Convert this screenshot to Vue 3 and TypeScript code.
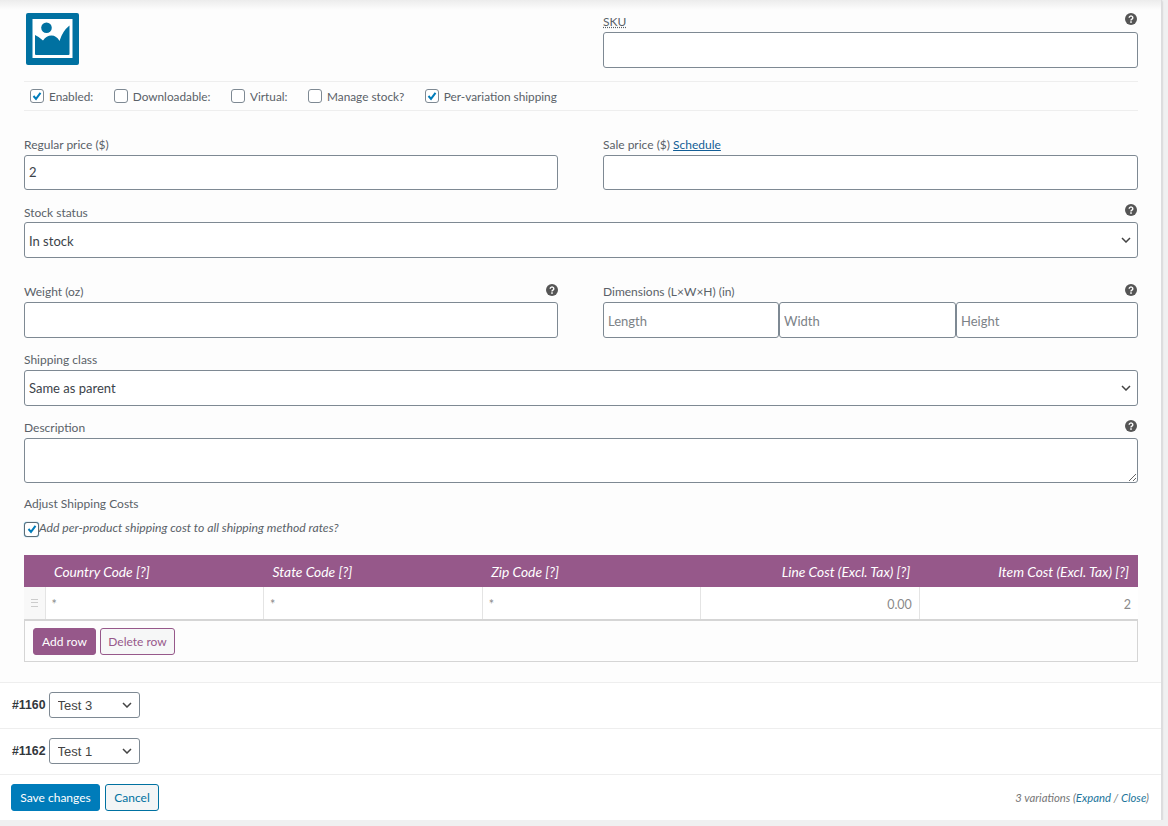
<template>
  <div class="panel">
    <div class="form">
      <div class="head">
        <svg class="thumb" width="53" height="52" viewBox="0 0 53 52">
          <rect width="53" height="52" rx="2" fill="#0071a1" />
          <rect x="6.500" y="6" width="40" height="39" fill="#fff" />
          <circle cx="20.500" cy="14.700" r="5.300" fill="#0071a1" />
          <path d="M9 22Q13.500 24 17 27.500Q20.500 22.500 25.500 22.500Q30.500 22.500 33.500 28Q36.500 18 43.500 12.500V41a1 1 0 0 1-1 1H10a1 1 0 0 1-1-1Z" fill="#0071a1" />
        </svg>
        <div class="field sku">
          <div class="label-row">
            <label><abbr>SKU</abbr></label>
            <svg class="help" width="12" height="12" viewBox="0 0 12 12"><circle cx="6" cy="6" r="6" fill="#555" /><path d="M4.200 4.700a1.800 1.700 0 1 1 2.700 1.500c-.6.350-.9.600-.9 1.300" fill="none" stroke="#fff" stroke-width="1.400" /><rect x="5.200" y="8.300" width="1.600" height="1.500" fill="#fff" /></svg>
          </div>
          <input class="control tall" type="text" />
        </div>
      </div>

      <div class="options">
        <label v-for="opt in options" :key="opt.name" class="option">
          <input class="check" type="checkbox" :checked="opt.on" />
          <span>{{ opt.name }}</span>
        </label>
      </div>

      <div class="two price-row">
        <div class="field">
          <div class="label-row"><label>Regular price ($)</label></div>
          <input class="control price" type="text" value="2" />
        </div>
        <div class="field">
          <div class="label-row"><label>Sale price ($) <a href="#">Schedule</a></label></div>
          <input class="control" type="text" />
        </div>
      </div>

      <div class="field stock">
        <div class="label-row short">
          <label>Stock status</label>
          <svg class="help" width="12" height="12" viewBox="0 0 12 12"><circle cx="6" cy="6" r="6" fill="#555" /><path d="M4.200 4.700a1.800 1.700 0 1 1 2.700 1.500c-.6.350-.9.600-.9 1.300" fill="none" stroke="#fff" stroke-width="1.400" /><rect x="5.200" y="8.300" width="1.600" height="1.500" fill="#fff" /></svg>
        </div>
        <select class="control tall pick low"><option>In stock</option></select>
      </div>

      <div class="two size-row">
        <div class="field">
          <div class="label-row">
            <label>Weight (oz)</label>
            <svg class="help flush" width="12" height="12" viewBox="0 0 12 12"><circle cx="6" cy="6" r="6" fill="#555" /><path d="M4.200 4.700a1.800 1.700 0 1 1 2.700 1.500c-.6.350-.9.600-.9 1.300" fill="none" stroke="#fff" stroke-width="1.400" /><rect x="5.200" y="8.300" width="1.600" height="1.500" fill="#fff" /></svg>
          </div>
          <input class="control tall" type="text" />
        </div>
        <div class="field">
          <div class="label-row">
            <label>Dimensions (L×W×H) (in)</label>
            <svg class="help" width="12" height="12" viewBox="0 0 12 12"><circle cx="6" cy="6" r="6" fill="#555" /><path d="M4.200 4.700a1.800 1.700 0 1 1 2.700 1.500c-.6.350-.9.600-.9 1.300" fill="none" stroke="#fff" stroke-width="1.400" /><rect x="5.200" y="8.300" width="1.600" height="1.500" fill="#fff" /></svg>
          </div>
          <div class="dims">
            <input class="control tall" type="text" placeholder="Length" />
            <input class="control tall" type="text" placeholder="Width" />
            <input class="control tall" type="text" placeholder="Height" />
          </div>
        </div>
      </div>

      <div class="field next">
        <div class="label-row"><label>Shipping class</label></div>
        <select class="control tall pick"><option>Same as parent</option></select>
      </div>

      <div class="field next">
        <div class="label-row">
          <label>Description</label>
          <svg class="help" width="12" height="12" viewBox="0 0 12 12"><circle cx="6" cy="6" r="6" fill="#555" /><path d="M4.200 4.700a1.800 1.700 0 1 1 2.700 1.500c-.6.350-.9.600-.9 1.300" fill="none" stroke="#fff" stroke-width="1.400" /><rect x="5.200" y="8.300" width="1.600" height="1.500" fill="#fff" /></svg>
        </div>
        <textarea class="control desc"></textarea>
      </div>

      <div class="adjust-title">Adjust Shipping Costs</div>
      <label class="adjust">
        <input class="check strong" type="checkbox" checked />
        <em>Add per-product shipping cost to all shipping method rates?</em>
      </label>

      <table class="rates">
        <colgroup>
          <col class="c-drag" />
          <col v-for="n in 5" :key="n" />
        </colgroup>
        <thead>
          <tr>
            <th></th>
            <th v-for="col in columns" :key="col.title" :class="{ num: col.num }">{{ col.title }} [?]</th>
          </tr>
        </thead>
        <tbody>
          <tr>
            <td class="drag"><span class="grip"></span></td>
            <td v-for="col in columns" :key="col.title" :class="{ num: col.num }">{{ col.value }}</td>
          </tr>
        </tbody>
      </table>
      <div class="rate-foot">
        <button class="add" type="button">Add row</button>
        <button class="del" type="button">Delete row</button>
      </div>
    </div>

    <div v-for="item in variations" :key="item.id" class="variation">
      <strong>#{{ item.id }}</strong>
      <select class="mini"><option>{{ item.name }}</option></select>
    </div>

    <div class="toolbar">
      <button class="save" type="button">Save changes</button>
      <button class="cancel" type="button">Cancel</button>
      <span class="count">3 variations (<a href="#">Expand</a> / <a href="#">Close</a>)</span>
    </div>
  </div>
</template>

<script setup lang="ts">
const options = [
  { name: "Enabled:", on: true },
  { name: "Downloadable:", on: false },
  { name: "Virtual:", on: false },
  { name: "Manage stock?", on: false },
  { name: "Per-variation shipping", on: true },
];

const columns = [
  { title: "Country Code", value: "*", num: false },
  { title: "State Code", value: "*", num: false },
  { title: "Zip Code", value: "*", num: false },
  { title: "Line Cost (Excl. Tax)", value: "0.00", num: true },
  { title: "Item Cost (Excl. Tax)", value: "2", num: true },
];

const variations = [
  { id: 1160, name: "Test 3" },
  { id: 1162, name: "Test 1" },
];
</script>

<style>
html,
body {
  margin: 0;
  background: #f0f0f1;
}
</style>

<style scoped>
.panel {
  width: 1162px;
  box-sizing: border-box;
  background: linear-gradient(#ececec, #fdfdfd 10px, #fdfdfd);
  border-right: 1px solid #dcdcde;
  box-shadow: 0 1px 2px rgba(0, 0, 0, 0.25);
  color: #5a6168;
  font-family: Lato, "Noto Sans", sans-serif;
  font-size: 12px;
}

.form {
  padding: 0 23px 20px 24px;
}

.head {
  display: grid;
  grid-template-columns: 534px 535px;
  column-gap: 45px;
  height: 81px;
}

.thumb {
  margin: 13px 0 0 2px;
}

.sku {
  padding-top: 12px;
}

.field {
  display: flex;
  flex-direction: column;
}

.label-row {
  display: flex;
  justify-content: space-between;
  align-items: center;
  height: 19px;
  line-height: 17px;
}

.label-row label {
  margin-top: -2px;
}

.label-row.short {
  height: 18px;
  line-height: 18px;
}

.label-row.short label {
  margin-top: 0;
}

.sku .label-row {
  height: 20px;
  line-height: 19px;
}

.label-row .help {
  margin: -6px 1px 0 0;
}

.label-row .help.flush {
  margin-right: 0;
}

.sku .label-row .help {
  margin-top: -7px;
}

abbr {
  text-decoration: underline dotted;
}

a {
  color: #135e96;
}

.control {
  box-sizing: border-box;
  display: block;
  width: 100%;
  height: 35px;
  margin: 0;
  padding: 0 4px;
  border: 1px solid #7e8993;
  border-radius: 3px;
  background: #fff;
  color: #3c434a;
  font: 13px Lato, "Noto Sans", sans-serif;
}

.control.tall {
  height: 36px;
}

.control.price {
  padding-bottom: 2px;
}

.control.low {
  padding-top: 2px;
}

.dims .control {
  padding-top: 2px;
}

.control::placeholder {
  color: #7c8287;
}

.pick,
.mini {
  appearance: none;
  background-image: url("data:image/svg+xml,%3Csvg xmlns='http://www.w3.org/2000/svg' width='10' height='6'%3E%3Cpath d='M1 1l4 4 4-4' fill='none' stroke='%23444' stroke-width='1.500'/%3E%3C/svg%3E");
  background-repeat: no-repeat;
}

.pick {
  background-position: right 6px center;
}

.options {
  display: flex;
  align-items: center;
  box-sizing: border-box;
  height: 30px;
  padding-left: 6px;
  border-top: 1px solid #eee;
  border-bottom: 1px solid #eee;
}

.option {
  display: flex;
  align-items: center;
  gap: 5px;
  margin-right: 20.500px;
  font-size: 11.800px;
}

.check {
  appearance: none;
  flex: none;
  box-sizing: border-box;
  width: 14px;
  height: 14px;
  margin: 0;
  border: 1px solid #7e8993;
  border-radius: 3px;
  background: #fff;
}

.check:checked {
  background: #fff url("data:image/svg+xml,%3Csvg xmlns='http://www.w3.org/2000/svg' width='12' height='12'%3E%3Cpath d='M2.500 6l2.500 2.800 4.500-6' fill='none' stroke='%23007cba' stroke-width='2'/%3E%3C/svg%3E") center no-repeat;
}

.price-row {
  margin-top: 25px;
}

.two {
  display: grid;
  grid-template-columns: 534px 535px;
  column-gap: 45px;
}

.stock {
  margin-top: 14px;
}

.size-row {
  margin-top: 25px;
}

.dims {
  display: grid;
  grid-template-columns: 176px 177px 182px;
}

.next {
  margin-top: 13px;
}

.desc {
  height: 45px;
}

.adjust-title {
  margin-top: 12px;
  line-height: 18px;
}

.adjust {
  display: flex;
  align-items: center;
  height: 16px;
  margin-top: 8px;
  font-size: 12.200px;
}

.adjust em {
  margin-top: -3px;
}

.check.strong {
  width: 15px;
  height: 15px;
  border-color: #5b6b75;
  box-shadow: 0 0 1px #007cba;
}

.rates {
  width: 1114px;
  margin-top: 18px;
  table-layout: fixed;
  border-collapse: collapse;
}

.c-drag {
  width: 21px;
}

.rates th {
  height: 32px;
  padding: 0 9px;
  background: #96588a;
  color: #fff;
  font-size: 13.800px;
  font-style: italic;
  font-weight: 400;
  text-align: left;
}

.rates td {
  box-sizing: border-box;
  height: 33px;
  padding: 3px 7px 0 6px;
  border-left: 1px solid #e4e4e4;
  border-bottom: 2px solid #d5d5d5;
  background: #fff;
  color: #8a8a8a;
  font-size: 12.500px;
}

.rates th.num {
  text-align: right;
}

.rates td.num {
  text-align: right;
}

.rates td.drag {
  padding: 0;
  border-left: 0;
  background: #f8f8f8;
}

.grip {
  display: block;
  width: 7px;
  height: 6px;
  margin: 0 auto;
  border-top: 1px solid #ccc;
  border-bottom: 1px solid #ccc;
  background: linear-gradient(#ccc, #ccc) 0 2px / 100% 1px no-repeat;
}

.rate-foot {
  display: flex;
  gap: 4px;
  box-sizing: border-box;
  height: 41px;
  padding: 7px 8px;
  border: 1px solid #d5d5d5;
  border-top: 0;
}

button {
  box-sizing: border-box;
  margin: 0;
  border-radius: 3px;
  font: inherit;
  cursor: pointer;
}

.add {
  width: 63px;
  height: 27px;
  padding: 0;
  border: 1px solid #96588a;
  background: #96588a;
  color: #fff;
}

.del {
  width: 75px;
  height: 27px;
  padding: 0;
  border: 1px solid #96588a;
  background: #f6f7f7;
  color: #96588a;
}

.variation {
  display: flex;
  align-items: center;
  gap: 3px;
  box-sizing: border-box;
  height: 46px;
  padding: 0 0 1px 12px;
  border-top: 1px solid #eee;
  background: #fff;
}

.variation strong {
  color: #32373c;
  font: 700 12.300px "Liberation Sans", Arial, sans-serif;
}

.mini {
  box-sizing: border-box;
  width: 91px;
  height: 26px;
  margin: 0;
  padding: 0 8px;
  border: 1px solid #7e8993;
  border-radius: 3px;
  background-color: #fff;
  background-position: right 7px center;
  color: #444;
  font: 13px "Liberation Sans", Arial, sans-serif;
}

.toolbar {
  display: flex;
  align-items: center;
  gap: 5px;
  box-sizing: border-box;
  height: 46px;
  padding: 0 12px 0 11px;
  border-top: 1px solid #eee;
  background: #fff;
}

.save {
  width: 89px;
  height: 27px;
  padding: 0;
  border: 1px solid #007cba;
  background: #007cba;
  color: #fff;
}

.cancel {
  width: 54px;
  height: 27px;
  padding: 0;
  border: 1px solid #0071a1;
  background: #f3f5f6;
  color: #0071a1;
}

.count {
  margin-left: auto;
  color: #777;
  font-size: 11.300px;
  font-style: italic;
}

.count a {
  color: #21759b;
  text-decoration: none;
}
</style>
